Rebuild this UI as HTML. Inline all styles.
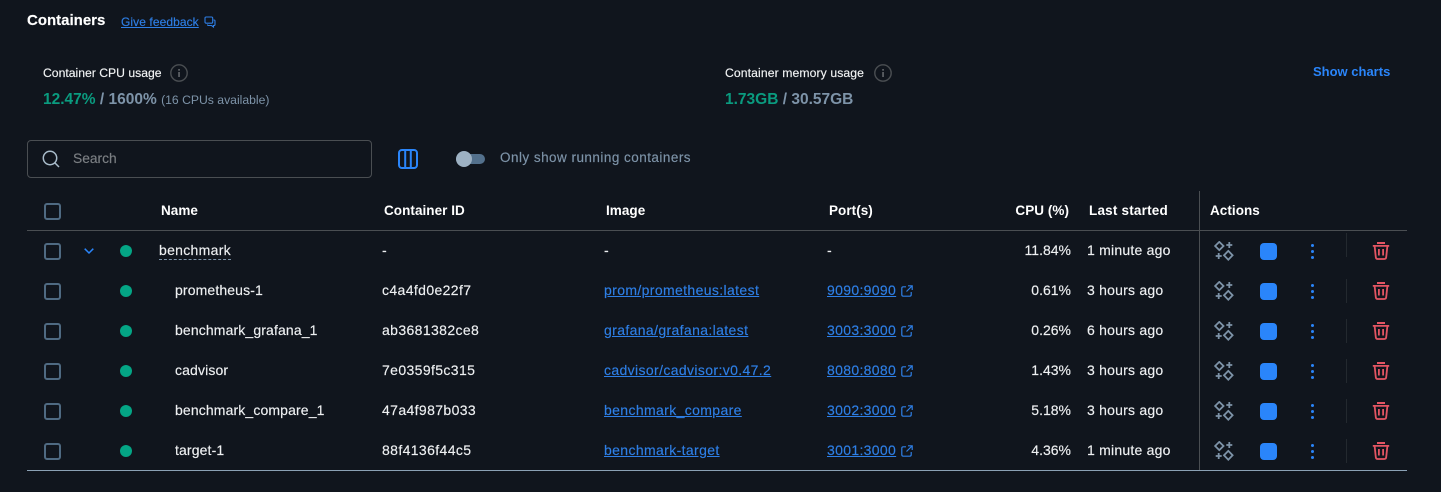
<!DOCTYPE html>
<html><head><meta charset="utf-8"><style>
html,body{margin:0;padding:0;background:#10151d;}
body{width:1441px;height:492px;position:relative;overflow:hidden;font-family:"Liberation Sans",sans-serif;font-size:14px;color:#eef0f2;}
.t{position:absolute;white-space:nowrap;line-height:20px;height:20px;-webkit-text-stroke:.15px currentColor;}
.h{font-weight:700;color:#fff;font-size:13.5px;top:200.5px;-webkit-text-stroke:0;letter-spacing:.05px;}
.r{text-align:right;}
.a{color:#2e7fe6;text-decoration:underline;letter-spacing:.37px;}
.n{letter-spacing:.13px;}
.i{letter-spacing:.38px;}
.p{letter-spacing:.33px;}
.l{letter-spacing:.22px;}
svg{position:absolute;overflow:visible;}
.cb{position:absolute;left:44px;width:13px;height:13px;border:2px solid #4f6a82;border-radius:3px;}
.dot{position:absolute;left:120px;width:12px;height:12px;border-radius:50%;background:#04a585;}
.stop{position:absolute;left:1259.5px;width:17px;height:17px;border-radius:4px;background:#2a85fa;}
.vd{position:absolute;left:1346px;width:1px;height:24px;background:#23292f;}
.kb{position:absolute;left:1310.5px;width:3px;height:3px;margin-top:.5px;border-radius:50%;background:#2a85fa;box-shadow:0 6px 0 #2a85fa,0 12px 0 #2a85fa;}
</style></head><body>
<svg width="0" height="0" style="position:absolute"><defs>
<symbol id="sp" viewBox="0 0 20 20"><g fill="none" stroke="#7d93a8" stroke-width="1.8"><path d="M5.3 .9 L9.5 5 L5.3 9.1 L1.1 5Z"/><path d="M14.3 9.9 L18.6 14.3 L14.3 18.7 L10 14.3Z"/><path d="M15.3 1v6M12.3 4h6M4.7 12v6M1.7 15h6"/></g></symbol>
<symbol id="tr" viewBox="0 0 18 18"><g fill="none" stroke="#e25563" stroke-width="1.8"><path d="M0.8 3.9H17.2"/><path d="M5 1H13" stroke-width="2"/><path d="M2.6 3.9L3.8 15.2Q4 17 5.6 17H12.4Q14 17 14.2 15.2L15.4 3.9"/><path d="M6.9 7V13.5M11.1 7V13.5"/></g></symbol>
<symbol id="ex" viewBox="0 0 12 12"><g fill="none" stroke="#2e7fe6" stroke-width="1.2"><path d="M5 1.8H2.2Q.8 1.8 .8 3.2V9.8Q.8 11.2 2.2 11.2H8.8Q10.2 11.2 10.2 9.8V7"/><path d="M7 .8H11.2V5M11 1L5.5 6.5"/></g></symbol>
<symbol id="in" viewBox="0 0 18 18"><circle cx="9" cy="9" r="8.2" fill="none" stroke="#4a4e52" stroke-width="1.4"/><rect x="8.2" y="8" width="1.7" height="5" fill="#5f6368"/><rect x="8.2" y="5" width="1.7" height="1.7" fill="#5f6368"/></symbol>
</defs></svg>

<div class="t" style="left:27px;top:11px;font-size:15px;font-weight:700;color:#fff;">Containers</div>
<div class="t a" style="left:121px;top:12px;font-size:12px;letter-spacing:.08px;">Give feedback</div>
<svg style="left:204px;top:16px" width="12" height="12" viewBox="0 0 12 12"><g fill="none" stroke="#2e7fe6" stroke-width="1.1"><path d="M1 2.2Q1 1 2.2 1H7.5Q8.7 1 8.7 2.2V6Q8.7 7.2 7.5 7.2H2.2Q1 7.2 1 6Z"/><path d="M9.5 4H10Q11 4 11 5V8.5Q11 9.5 10 9.5H9.5V11L7.5 9.5H4.5Q3.5 9.5 3.5 8.5"/></g></svg>

<div class="t" style="left:43px;top:63px;font-size:12.2px;color:#f2f4f5;">Container CPU usage</div>
<svg style="left:170px;top:64px" width="18" height="18"><use href="#in"/></svg>
<div class="t" style="left:43px;top:90px;font-size:15.5px;font-weight:700;color:#7d93a8;-webkit-text-stroke:0;"><span style="color:#0a9b7f">12.47%</span> / 1600% <span style="font-size:12.2px;font-weight:400;color:#7d93a8">(16 CPUs available)</span></div>

<div class="t" style="left:725px;top:63px;font-size:12.2px;color:#f2f4f5;letter-spacing:.1px;">Container memory usage</div>
<svg style="left:874px;top:64px" width="18" height="18"><use href="#in"/></svg>
<div class="t" style="left:725px;top:90px;font-size:15.5px;font-weight:700;color:#7d93a8;-webkit-text-stroke:0;"><span style="color:#0a9b7f">1.73GB</span> / 30.57GB</div>
<div class="t" style="left:1313px;top:62px;font-size:13px;font-weight:700;color:#2a85fa;-webkit-text-stroke:0;">Show charts</div>

<div style="position:absolute;left:27px;top:140px;width:343px;height:36px;border:1px solid #4a4e52;border-radius:4px;"></div>
<svg style="left:42px;top:150px" width="18" height="18" viewBox="0 0 18 18"><g fill="none" stroke="#a9bccb" stroke-width="1.5"><circle cx="8" cy="8" r="6.7"/><path d="M13 13L17 17"/></g></svg>
<div class="t" style="left:73px;top:149px;font-size:13.8px;color:#7b7f83;">Search</div>
<svg style="left:398px;top:149px" width="20" height="20" viewBox="0 0 20 20"><g fill="none" stroke="#2a85fa" stroke-width="2"><rect x="1" y="1" width="18" height="18" rx="3"/><path d="M7.2 1V19M12.8 1V19"/></g></svg>
<div style="position:absolute;left:456px;top:154px;width:29px;height:10px;border-radius:5px;background:#53708c;"></div>
<div style="position:absolute;left:456px;top:151px;width:16px;height:16px;border-radius:50%;background:#9db1c3;"></div>
<div class="t" style="left:500px;top:148px;font-size:13.5px;color:#7d93a8;letter-spacing:.47px;">Only show running containers</div>

<div class="cb" style="top:203px"></div>
<div class="t h" style="left:161px;">Name</div>
<div class="t h" style="left:384px;">Container ID</div>
<div class="t h" style="left:606px;">Image</div>
<div class="t h" style="left:829px;">Port(s)</div>
<div class="t h r" style="left:969px;width:100px;">CPU (%)</div>
<div class="t h" style="left:1089px;letter-spacing:.2px;">Last started</div>
<div class="t h" style="left:1210px;">Actions</div>
<div style="position:absolute;left:27px;top:230px;width:1380px;height:1px;background:#4a4e52;"></div>
<div style="position:absolute;left:1199px;top:191px;width:1px;height:279px;background:#4a4e52;"></div>
<div style="position:absolute;left:27px;top:470px;width:1380px;height:1px;background:#8ba1b5;"></div>

<!-- row 0 -->
<div class="cb" style="top:243px"></div>
<svg style="left:84px;top:248px" width="10" height="6" viewBox="0 0 10 6"><path d="M.7 .7L5 5L9.3 .7" fill="none" stroke="#2a85fa" stroke-width="1.5"/></svg>
<div class="dot" style="top:245px"></div>
<div class="t" style="left:159px;top:240px;letter-spacing:.3px;">benchmark</div>
<div style="position:absolute;left:159px;top:259px;width:72px;border-top:1px dashed #7d93a8;"></div>
<div class="t" style="left:382px;top:240px;">-</div>
<div class="t" style="left:604px;top:240px;">-</div>
<div class="t" style="left:827px;top:240px;">-</div>
<div class="t r" style="left:971px;width:100px;top:240px;">11.84%</div>
<div class="t l" style="left:1087px;top:240px;">1 minute ago</div>
<svg style="left:1214px;top:241px" width="20" height="20"><use href="#sp"/></svg>
<div class="stop" style="top:242.5px"></div><div class="kb" style="top:243px"></div><div class="vd" style="top:233px"></div>
<svg style="left:1372px;top:242px" width="18" height="18"><use href="#tr"/></svg>

<!-- row 1 -->
<div class="cb" style="top:283px"></div><div class="dot" style="top:285px"></div>
<div class="t n" style="left:175px;top:280px;">prometheus-1</div>
<div class="t i" style="left:382px;top:280px;">c4a4fd0e22f7</div>
<div class="t a" style="left:604px;top:280px;">prom/prometheus:latest</div>
<div class="t a p" style="left:827px;top:280px;">9090:9090</div>
<svg style="left:901px;top:285px" width="12" height="12"><use href="#ex"/></svg>
<div class="t r" style="left:971px;width:100px;top:280px;">0.61%</div>
<div class="t l" style="left:1087px;top:280px;">3 hours ago</div>
<svg style="left:1214px;top:281px" width="20" height="20"><use href="#sp"/></svg>
<div class="stop" style="top:282.5px"></div><div class="kb" style="top:283px"></div><div class="vd" style="top:279px"></div>
<svg style="left:1372px;top:282px" width="18" height="18"><use href="#tr"/></svg>

<!-- row 2 -->
<div class="cb" style="top:323px"></div><div class="dot" style="top:325px"></div>
<div class="t n" style="left:175px;top:320px;">benchmark_grafana_1</div>
<div class="t i" style="left:382px;top:320px;">ab3681382ce8</div>
<div class="t a" style="left:604px;top:320px;">grafana/grafana:latest</div>
<div class="t a p" style="left:827px;top:320px;">3003:3000</div>
<svg style="left:901px;top:325px" width="12" height="12"><use href="#ex"/></svg>
<div class="t r" style="left:971px;width:100px;top:320px;">0.26%</div>
<div class="t l" style="left:1087px;top:320px;">6 hours ago</div>
<svg style="left:1214px;top:321px" width="20" height="20"><use href="#sp"/></svg>
<div class="stop" style="top:322.5px"></div><div class="kb" style="top:323px"></div><div class="vd" style="top:319px"></div>
<svg style="left:1372px;top:322px" width="18" height="18"><use href="#tr"/></svg>

<!-- row 3 -->
<div class="cb" style="top:363px"></div><div class="dot" style="top:365px"></div>
<div class="t n" style="left:175px;top:360px;">cadvisor</div>
<div class="t i" style="left:382px;top:360px;">7e0359f5c315</div>
<div class="t a" style="left:604px;top:360px;">cadvisor/cadvisor:v0.47.2</div>
<div class="t a p" style="left:827px;top:360px;">8080:8080</div>
<svg style="left:901px;top:365px" width="12" height="12"><use href="#ex"/></svg>
<div class="t r" style="left:971px;width:100px;top:360px;">1.43%</div>
<div class="t l" style="left:1087px;top:360px;">3 hours ago</div>
<svg style="left:1214px;top:361px" width="20" height="20"><use href="#sp"/></svg>
<div class="stop" style="top:362.5px"></div><div class="kb" style="top:363px"></div><div class="vd" style="top:359px"></div>
<svg style="left:1372px;top:362px" width="18" height="18"><use href="#tr"/></svg>

<!-- row 4 -->
<div class="cb" style="top:403px"></div><div class="dot" style="top:405px"></div>
<div class="t n" style="left:175px;top:400px;">benchmark_compare_1</div>
<div class="t i" style="left:382px;top:400px;">47a4f987b033</div>
<div class="t a" style="left:604px;top:400px;">benchmark_compare</div>
<div class="t a p" style="left:827px;top:400px;">3002:3000</div>
<svg style="left:901px;top:405px" width="12" height="12"><use href="#ex"/></svg>
<div class="t r" style="left:971px;width:100px;top:400px;">5.18%</div>
<div class="t l" style="left:1087px;top:400px;">3 hours ago</div>
<svg style="left:1214px;top:401px" width="20" height="20"><use href="#sp"/></svg>
<div class="stop" style="top:402.5px"></div><div class="kb" style="top:403px"></div><div class="vd" style="top:399px"></div>
<svg style="left:1372px;top:402px" width="18" height="18"><use href="#tr"/></svg>

<!-- row 5 -->
<div class="cb" style="top:443px"></div><div class="dot" style="top:445px"></div>
<div class="t n" style="left:175px;top:440px;">target-1</div>
<div class="t i" style="left:382px;top:440px;">88f4136f44c5</div>
<div class="t a" style="left:604px;top:440px;">benchmark-target</div>
<div class="t a p" style="left:827px;top:440px;">3001:3000</div>
<svg style="left:901px;top:445px" width="12" height="12"><use href="#ex"/></svg>
<div class="t r" style="left:971px;width:100px;top:440px;">4.36%</div>
<div class="t l" style="left:1087px;top:440px;">1 minute ago</div>
<svg style="left:1214px;top:441px" width="20" height="20"><use href="#sp"/></svg>
<div class="stop" style="top:442.5px"></div><div class="kb" style="top:443px"></div><div class="vd" style="top:439px"></div>
<svg style="left:1372px;top:442px" width="18" height="18"><use href="#tr"/></svg>
</body></html>
